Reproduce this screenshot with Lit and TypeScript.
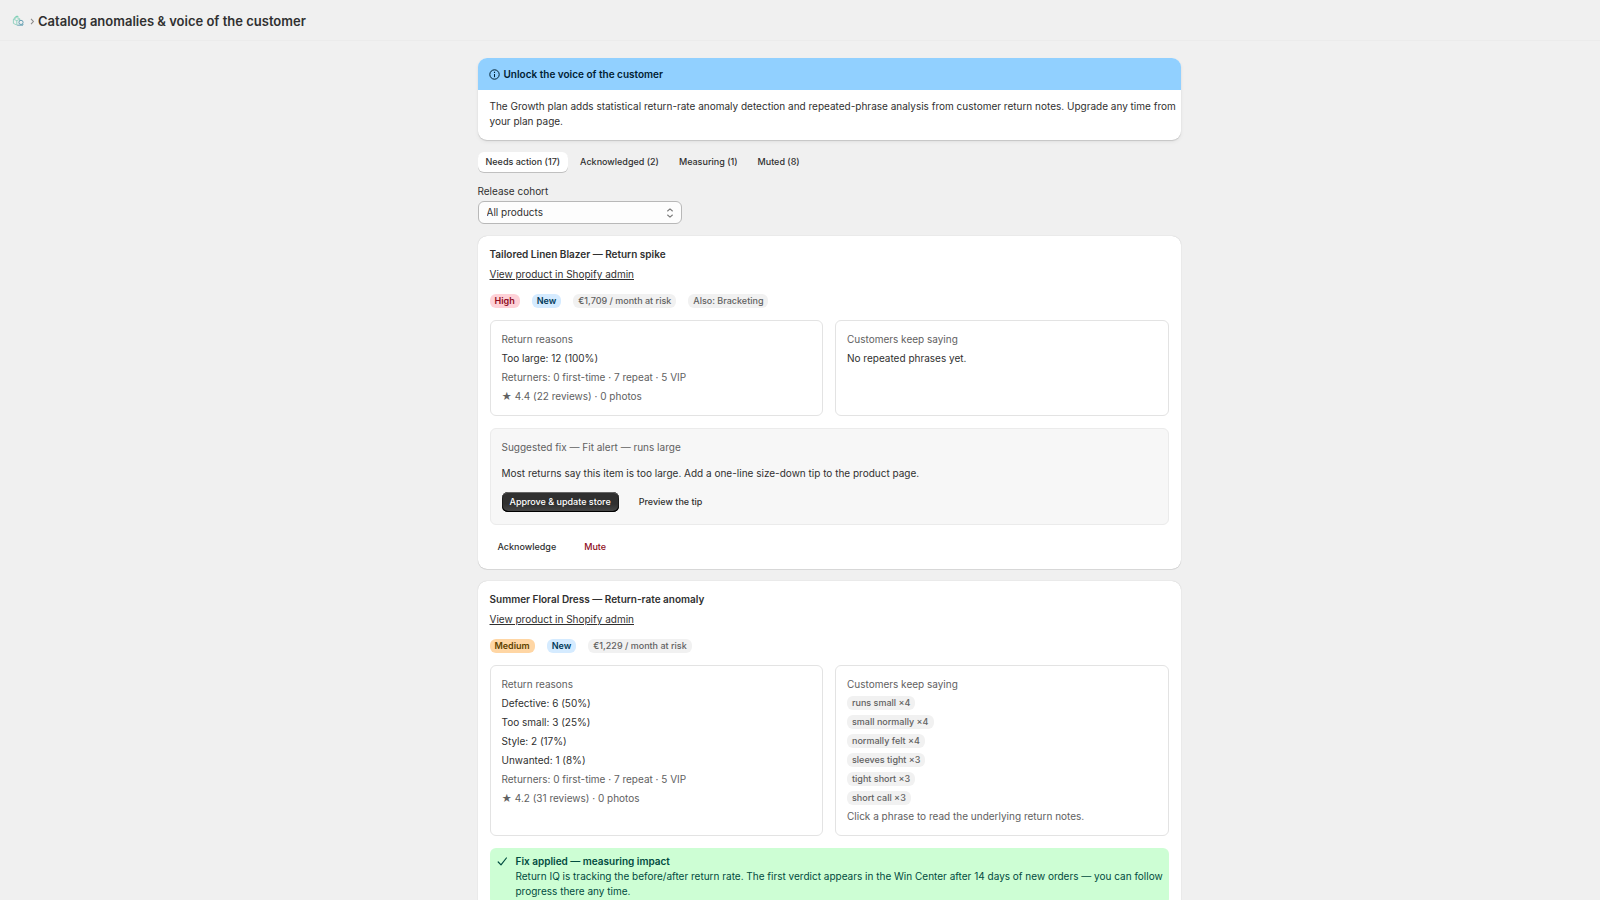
import { LitElement, html, css, nothing } from "lit";
import { customElement, property, state } from "lit/decorators.js";

interface Badge {
  text: string;
  tone: "critical" | "info" | "warning" | "neutral";
}

interface Anomaly {
  id: string;
  title: string;
  badges: Badge[];
  reasons: string[];
  returners: string;
  rating: string;
  phrases: string[];
  fix?: { title: string; body: string };
  applied?: boolean;
}

const anomalies: Anomaly[] = [
  {
    id: "blazer",
    title: "Tailored Linen Blazer — Return spike",
    badges: [
      { text: "High", tone: "critical" },
      { text: "New", tone: "info" },
      { text: "€1,709 / month at risk", tone: "neutral" },
      { text: "Also: Bracketing", tone: "neutral" },
    ],
    reasons: ["Too large: 12 (100%)"],
    returners: "Returners: 0 first-time · 7 repeat · 5 VIP",
    rating: "★ 4.4 (22 reviews) · 0 photos",
    phrases: [],
    fix: {
      title: "Suggested fix — Fit alert — runs large",
      body: "Most returns say this item is too large. Add a one-line size-down tip to the product page.",
    },
  },
  {
    id: "dress",
    title: "Summer Floral Dress — Return-rate anomaly",
    badges: [
      { text: "Medium", tone: "warning" },
      { text: "New", tone: "info" },
      { text: "€1,229 / month at risk", tone: "neutral" },
    ],
    reasons: [
      "Defective: 6 (50%)",
      "Too small: 3 (25%)",
      "Style: 2 (17%)",
      "Unwanted: 1 (8%)",
    ],
    returners: "Returners: 0 first-time · 7 repeat · 5 VIP",
    rating: "★ 4.2 (31 reviews) · 0 photos",
    phrases: [
      "runs small ×4",
      "small normally ×4",
      "normally felt ×4",
      "sleeves tight ×3",
      "tight short ×3",
      "short call ×3",
    ],
    applied: true,
  },
];

const tabs = ["Needs action (17)", "Acknowledged (2)", "Measuring (1)", "Muted (8)"];

const shared = css`
  * {
    box-sizing: border-box;
  }
  h1,
  h2,
  h3,
  p,
  ul {
    margin: 0;
    padding: 0;
    font-size: inherit;
    font-weight: inherit;
  }
  button,
  select {
    font: inherit;
    color: inherit;
    border: 0;
    background: none;
    margin: 0;
    cursor: pointer;
  }
`;

@customElement("anomaly-card")
export class AnomalyCard extends LitElement {
  @property({ attribute: false }) item!: Anomaly;

  static styles = [
    shared,
    css`
      :host {
        display: block;
      }
      .card {
        display: flex;
        flex-direction: column;
        gap: 12px;
        padding: 11px 12px 12px;
        background: #fff;
        border-radius: 9px;
        box-shadow: 0 1px 0 rgba(0, 0, 0, 0.08), 0 0 1px rgba(0, 0, 0, 0.25);
      }
      .head {
        display: flex;
        flex-direction: column;
        align-items: flex-start;
        gap: 5px;
      }
      .title {
        font-weight: 600;
      }
      .link {
        color: inherit;
        text-decoration: underline;
      }
      .badges {
        display: flex;
        flex-wrap: wrap;
        gap: 12px;
      }
      .badge {
        display: inline-block;
        padding: 0 5px;
        border-radius: 6px;
        font-size: 9px;
        line-height: 14px;
        font-weight: 500;
        color: #616161;
        background: #f1f1f1;
      }
      .critical {
        color: #8e0b21;
        background: #fed1d7;
        font-weight: 600;
      }
      .info {
        color: #003a5a;
        background: #d5ebff;
        font-weight: 600;
      }
      .warning {
        color: #5e4200;
        background: #ffd6a4;
        font-weight: 600;
      }
      .columns {
        display: grid;
        grid-template-columns: 1fr 1fr;
        gap: 12px;
      }
      .box {
        display: flex;
        flex-direction: column;
        align-items: flex-start;
        gap: 4px;
        padding: 11px;
        border: 1px solid #e3e3e3;
        border-radius: 6px;
      }
      .phrases {
        display: flex;
        flex-direction: column;
        align-items: flex-start;
        gap: 5px;
        list-style: none;
      }
      .phrases li {
        display: flex;
      }
      .subdued {
        color: #616161;
      }
      .fix {
        gap: 11px;
        padding-bottom: 12px;
        background: #f7f7f7;
        border-color: #ebebeb;
      }
      .actions {
        display: flex;
        gap: 12px;
      }
      .button {
        height: 20px;
        padding: 0 8px;
        border-radius: 6px;
        font-size: 9px;
        line-height: 20px;
        font-weight: 500;
      }
      .primary {
        color: #fff;
        background: linear-gradient(#303030 60%, #484848);
        box-shadow: inset 0 -1px 0 #000, inset 0 1px 0 #666, inset 0 0 0 1px #1a1a1a;
      }
      .danger {
        color: #8e0b21;
      }
      .applied {
        display: flex;
        gap: 6px;
        padding: 6px 2px 6px 6px;
        border-radius: 6px;
        color: #014b40;
        background: #cdfed4;
      }
      .check {
        flex: none;
        width: 14px;
        height: 15px;
      }
    `,
  ];

  render() {
    const a = this.item;
    return html`
      <article class="card">
        <div class="head">
          <h2 class="title">${a.title}</h2>
          <a class="link" href="#${a.id}">View product in Shopify admin</a>
        </div>
        <div class="badges">
          ${a.badges.map((b) => html`<span class="badge ${b.tone}">${b.text}</span>`)}
        </div>
        <div class="columns">
          <section class="box">
            <h3 class="subdued">Return reasons</h3>
            ${a.reasons.map((r) => html`<p>${r}</p>`)}
            <p class="subdued">${a.returners}</p>
            <p class="subdued">${a.rating}</p>
          </section>
          <section class="box">
            <h3 class="subdued">Customers keep saying</h3>
            ${a.phrases.length
              ? html`<ul class="phrases">
                    ${a.phrases.map((p) => html`<li><button class="badge">${p}</button></li>`)}
                  </ul>
                  <p class="subdued">Click a phrase to read the underlying return notes.</p>`
              : html`<p>No repeated phrases yet.</p>`}
          </section>
        </div>
        ${a.fix
          ? html`<section class="box fix">
                <h3 class="subdued">${a.fix.title}</h3>
                <p>${a.fix.body}</p>
                <div class="actions">
                  <button class="button primary">Approve &amp; update store</button>
                  <button class="button">Preview the tip</button>
                </div>
              </section>
              <div class="actions">
                <button class="button">Acknowledge</button>
                <button class="button danger">Mute</button>
              </div>`
          : nothing}
        ${a.applied
          ? html`<section class="applied">
              <svg class="check" viewBox="0 0 14 15" fill="none" stroke="currentColor" stroke-width="1.2" stroke-linecap="round" stroke-linejoin="round" aria-hidden="true">
                <path d="M2.2 8 5 10.8 10.4 4" />
              </svg>
              <div>
                <h3 class="title">Fix applied — measuring impact</h3>
                <p>
                  Return IQ is tracking the before/after return rate. The first verdict appears in the Win
                  Center after 14 days of new orders — you can follow progress there any time.
                </p>
              </div>
            </section>`
          : nothing}
      </article>
    `;
  }
}

@customElement("app-root")
export class AppRoot extends LitElement {
  @state() private active = 0;

  static styles = [
    shared,
    css`
      :host {
        display: block;
        height: 100vh;
        overflow-y: auto;
        scrollbar-width: none;
        background: #f0f0f0;
        color: #303030;
        font: 400 10px/15px Inter, sans-serif;
      }
      .topbar {
        display: flex;
        align-items: center;
        height: 41px;
        padding: 1px 12px 0;
        border-bottom: 1px solid #ebebeb;
      }
      .logo {
        width: 12px;
        height: 12px;
      }
      .home {
        display: flex;
      }
      .chevron {
        width: 14px;
        height: 12px;
      }
      .heading {
        font-size: 13px;
        line-height: 18px;
        font-weight: 600;
      }
      .page {
        display: flex;
        flex-direction: column;
        gap: 12px;
        width: 100%;
        max-width: 727px;
        margin: 0 auto;
        padding: 17px 12px;
      }
      .main {
        padding-left: 58px;
      }
      .banner {
        overflow: hidden;
        border-radius: 9px;
        background: #fff;
        box-shadow: 0 1px 1px rgba(0, 0, 0, 0.14), 0 2px 4px rgba(0, 0, 0, 0.06);
      }
      .banner-head {
        display: flex;
        align-items: center;
        gap: 4px;
        padding: 0 11px;
        height: 32px;
        font-weight: 600;
        color: #002133;
        background: #91d0ff;
      }
      .info-icon {
        width: 11px;
        height: 11px;
      }
      .banner-text {
        padding: 9px 4px 11px 12px;
      }
      .tabs {
        display: flex;
        gap: 4px;
      }
      .tab {
        height: 20px;
        padding: 0 8px;
        border-radius: 6px;
        font-size: 9px;
        line-height: 20px;
        font-weight: 500;
      }
      .active {
        background: #fff;
        box-shadow: 0 1px 0 rgba(0, 0, 0, 0.2);
      }
      .field {
        display: grid;
        grid-template-columns: 204px;
        gap: 2px;
      }
      .control {
        display: grid;
      }
      .select {
        grid-area: 1 / 1;
        appearance: none;
        height: 23px;
        padding: 0 8px;
        border: 1px solid #b8b8b8;
        border-radius: 6px;
        background: #fdfdfd;
      }
      .arrows {
        grid-area: 1 / 1;
        place-self: center end;
        width: 8px;
        height: 12px;
        margin-right: 8px;
        pointer-events: none;
      }
    `,
  ];

  render() {
    return html`
      <header class="topbar">
        <a class="home" href="#home" aria-label="Home">
          <svg class="logo" viewBox="0 0 12 12" fill="none" aria-hidden="true">
            <path d="M1.4 4.2 4.6 2.6l3.2 1.2V6M1.4 4.2v4.2L4.8 10V5.6L1.4 4.2Zm3.4 1.4 3-1.4" stroke="#8cd0bd" stroke-width=".9" />
            <path d="M2.4 2.8 5 1l1.5.9" stroke="#55c6a0" stroke-width=".9" />
            <circle cx="9" cy="7.4" r="2.1" stroke="#68a1b4" stroke-width="1" />
            <path d="m10.4 9 1 1M5.2 10.2H11" stroke="#68a1b4" stroke-width="1" />
          </svg>
        </a>
        <svg class="chevron" viewBox="0 0 14 12" fill="none" stroke="#8a8a8a" stroke-width="1.1" aria-hidden="true">
          <path d="m7 3.8 2.4 2.7L7 9.2" />
        </svg>
        <h1 class="heading">Catalog anomalies &amp; voice of the customer</h1>
      </header>
      <main class="main">
        <div class="page">
          <section class="banner">
            <div class="banner-head">
              <svg class="info-icon" viewBox="0 0 11 11" fill="none" stroke="currentColor" aria-hidden="true">
                <circle cx="5.5" cy="5.5" r="4.7" stroke-width="1" />
                <path d="M5.5 5v3.2" stroke-width="1" />
                <path d="M5.5 2.8v1.1" stroke-width="1.1" />
              </svg>
              <h2>Unlock the voice of the customer</h2>
            </div>
            <p class="banner-text">
              The Growth plan adds statistical return-rate anomaly detection and repeated-phrase analysis
              from customer return notes. Upgrade any time from your plan page.
            </p>
          </section>
          <nav class="tabs" role="tablist">
            ${tabs.map(
              (t, i) => html`<button
                class="tab ${i === this.active ? "active" : ""}"
                role="tab"
                aria-selected=${i === this.active}
                @click=${() => (this.active = i)}
              >${t}</button>`,
            )}
          </nav>
          <div class="field">
            <label for="cohort">Release cohort</label>
            <div class="control">
              <select id="cohort" class="select">
                <option>All products</option>
              </select>
              <svg class="arrows" viewBox="0 0 8 12" fill="none" stroke="#7a7a7a" stroke-width="1.1" stroke-linecap="round" stroke-linejoin="round" aria-hidden="true">
                <path d="M1.6 4 4 1.8 6.4 4M1.6 8 4 10.2 6.4 8" />
              </svg>
            </div>
          </div>
          ${anomalies.map((a) => html`<anomaly-card .item=${a}></anomaly-card>`)}
        </div>
      </main>
    `;
  }
}
